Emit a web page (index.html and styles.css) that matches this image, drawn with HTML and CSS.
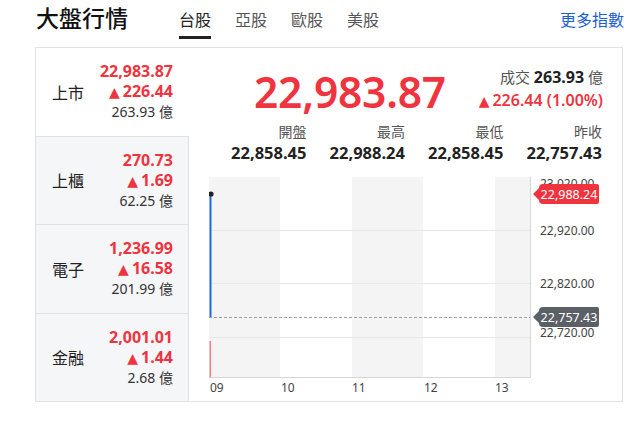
FILE: index.html
```html
<!DOCTYPE html>
<html lang="zh-Hant">
<head>
<meta charset="utf-8">
<link rel="stylesheet" href="styles.css">
</head>
<body>
<div class="page">
  <header class="head">
    <h1 class="title">大盤行情</h1>
    <nav class="tabs">
      <span class="tab active">台股</span>
      <span class="tab">亞股</span>
      <span class="tab">歐股</span>
      <span class="tab">美股</span>
    </nav>
    <a class="more">更多指數</a>
  </header>

  <section class="card">
    <div class="list">
      <div class="row selected">
        <span class="name">上市</span>
        <div class="vals">
          <span class="v up">22,983.87</span>
          <span class="v up"><i class="tri">▲</i>226.44</span>
          <span class="v vol">263.93 億</span>
        </div>
      </div>
      <div class="row">
        <span class="name">上櫃</span>
        <div class="vals">
          <span class="v up">270.73</span>
          <span class="v up"><i class="tri">▲</i>1.69</span>
          <span class="v vol">62.25 億</span>
        </div>
      </div>
      <div class="row">
        <span class="name">電子</span>
        <div class="vals">
          <span class="v up">1,236.99</span>
          <span class="v up"><i class="tri">▲</i>16.58</span>
          <span class="v vol">201.99 億</span>
        </div>
      </div>
      <div class="row">
        <span class="name">金融</span>
        <div class="vals">
          <span class="v up">2,001.01</span>
          <span class="v up"><i class="tri">▲</i>1.44</span>
          <span class="v vol">2.68 億</span>
        </div>
      </div>
    </div>

    <div class="detail">
      <div class="quote">
        <span class="price">22,983.87</span>
        <div class="info">
          <span class="turnover">成交 <b>263.93</b> 億</span>
          <span class="chg"><i class="tri">▲</i>226.44 (1.00%)</span>
        </div>
      </div>
      <div class="stats">
        <div class="stat"><span class="lbl">開盤</span><span class="num">22,858.45</span></div>
        <div class="stat"><span class="lbl">最高</span><span class="num">22,988.24</span></div>
        <div class="stat"><span class="lbl">最低</span><span class="num">22,858.45</span></div>
        <div class="stat"><span class="lbl">昨收</span><span class="num">22,757.43</span></div>
      </div>
      <svg class="chart" width="413" height="224" viewBox="0 0 413 224">
        <rect x="0" y="0" width="321" height="200" fill="#ffffff"/>
        <rect x="0" y="0" width="71" height="200" fill="#f4f4f4"/>
        <rect x="143" y="0" width="71" height="200" fill="#f4f4f4"/>
        <rect x="286" y="0" width="35" height="200" fill="#f4f4f4"/>
        <line x1="0" y1="53.5" x2="321" y2="53.5" stroke="#e8e8ea" stroke-width="1"/>
        <line x1="0" y1="106.5" x2="321" y2="106.5" stroke="#e8e8ea" stroke-width="1"/>
        <line x1="0" y1="160.5" x2="321" y2="160.5" stroke="#e8e8ea" stroke-width="1"/>
        <line x1="0" y1="200.5" x2="321.5" y2="200.5" stroke="#d6d6da" stroke-width="1"/>
        <line x1="321.5" y1="0" x2="321.5" y2="200.5" stroke="#d6d6da" stroke-width="1"/>
        <line x1="0" y1="140.5" x2="321" y2="140.5" stroke="#a0a0a0" stroke-width="1" stroke-dasharray="3 2"/>
        <line x1="1.5" y1="18" x2="1.5" y2="140" stroke="#1d6ae0" stroke-width="2"/>
        <circle cx="2" cy="17" r="2.6" fill="#222"/>
        <rect x="0.5" y="164" width="1.6" height="36" fill="#e8868c"/>
        <g class="ylab">
          <text x="331" y="11">23,020.00</text>
          <text x="331" y="58">22,920.00</text>
          <text x="331" y="111">22,820.00</text>
          <text x="331" y="160">22,720.00</text>
        </g>
        <g class="xlab">
          <text x="1" y="215">09</text>
          <text x="72" y="215">10</text>
          <text x="143" y="215">11</text>
          <text x="215" y="215">12</text>
          <text x="286" y="215">13</text>
        </g>
        <path d="M324 17 L330 11 Q330 7 334 7 L388 7 Q390 7 390 9 L390 25 Q390 27 388 27 L334 27 Q330 27 330 23 Z" fill="#ef3440"/>
        <text class="tag" x="360" y="21.5">22,988.24</text>
        <path d="M324 140 L330 134 Q330 130 334 130 L388 130 Q390 130 390 132 L390 148 Q390 150 388 150 L334 150 Q330 150 330 146 Z" fill="#5b6067"/>
        <text class="tag" x="360" y="144.5">22,757.43</text>
      </svg>
    </div>
  </section>
</div>
</body>
</html>
```

FILE: styles.css
```css
* { box-sizing: border-box; margin: 0; padding: 0; }
html, body { background: #fff; }
body {
  width: 637px;
  height: 433px;
  overflow: hidden;
  font-family: "Noto Sans", "Noto Sans CJK TC", sans-serif;
  color: #222;
}
.page { padding-left: 35px; }

.head {
  height: 47px;
  display: flex;
  align-items: flex-start;
  width: 589px;
}
.title {
  font-family: "Noto Sans CJK TC", sans-serif;
  font-size: 23px;
  font-weight: 500;
  line-height: 34px;
  padding-left: 1px;
  color: #111;
}
.tabs {
  display: flex;
  gap: 24px;
  margin-left: 51px;
}
.tab {
  font-family: "Noto Sans CJK TC", sans-serif;
  font-size: 16px;
  line-height: 24px;
  padding-top: 7px;
  height: 39px;
  color: #555;
  border-bottom: 3px solid transparent;
}
.tab.active {
  color: #222;
  border-bottom-color: #222;
}
.more {
  margin-left: auto;
  font-family: "Noto Sans CJK TC", sans-serif;
  font-size: 16px;
  line-height: 24px;
  padding-top: 7px;
  color: #1d5fd6;
}

.card {
  width: 588px;
  height: 355px;
  border: 1px solid #e2e2e4;
  display: flex;
}
.list {
  width: 154px;
  display: flex;
  flex-direction: column;
}
.row {
  flex: 1;
  display: flex;
  align-items: center;
  justify-content: space-between;
  padding: 0 15px 0 16px;
  background: #f5f6f8;
  border-right: 1px solid #e2e2e6;
  border-top: 1px solid #e2e2e6;
}
.row.selected {
  background: #fff;
  border-right-color: transparent;
  border-top: none;
}
.name {
  font-family: "Noto Sans CJK TC", sans-serif;
  font-size: 16px;
  color: #222;
}
.vals {
  display: flex;
  flex-direction: column;
  align-items: flex-end;
}
.v { font-size: 16px; line-height: 20px; }
.up { color: #ef3440; font-weight: 700; }
.vol { font-size: 14px; font-weight: 400; color: #333; }
.tri {
  font-style: normal;
  font-family: "DejaVu Sans", sans-serif;
  font-size: 14px;
  margin-right: 3px;
}

.detail {
  flex: 1;
  padding: 0 0 0 19px;
  display: flex;
  flex-direction: column;
}
.quote {
  display: flex;
  justify-content: space-between;
  padding: 16px 19px 0 46px;
  height: 74px;
}
.price {
  font-size: 42.5px;
  line-height: 56px;
  font-weight: 600;
  color: #ef3440;
  letter-spacing: -0.2px;
}
.info {
  display: flex;
  flex-direction: column;
  align-items: flex-end;
  padding-top: 2px;
}
.turnover {
  font-family: "Noto Sans", "Noto Sans CJK TC", sans-serif;
  font-size: 15px;
  line-height: 22px;
  color: #555;
}
.turnover b { color: #222; font-weight: 700; font-size: 16px; }
.chg {
  font-size: 16px;
  line-height: 24px;
  font-weight: 600;
  color: #ef3440;
}
.stats {
  display: grid;
  grid-template-columns: repeat(4, 1fr);
  width: 394px;
  height: 55px;
}
.stat {
  display: flex;
  flex-direction: column;
  align-items: flex-end;
  gap: 2px;
}
.lbl {
  font-family: "Noto Sans CJK TC", sans-serif;
  font-size: 14px;
  line-height: 19px;
  color: #555;
}
.num {
  font-size: 16.5px;
  line-height: 19px;
  font-weight: 700;
  color: #222;
}
.chart { display: block; margin-left: 1px; }
.ylab text {
  font-family: "Noto Sans", sans-serif;
  font-size: 12px;
  fill: #444;
}
.xlab text {
  font-family: "Noto Sans", sans-serif;
  font-size: 12px;
  fill: #444;
}
.tag {
  font-family: "Noto Sans", sans-serif;
  font-size: 12.5px;
  fill: #fff;
  text-anchor: middle;
}
```
